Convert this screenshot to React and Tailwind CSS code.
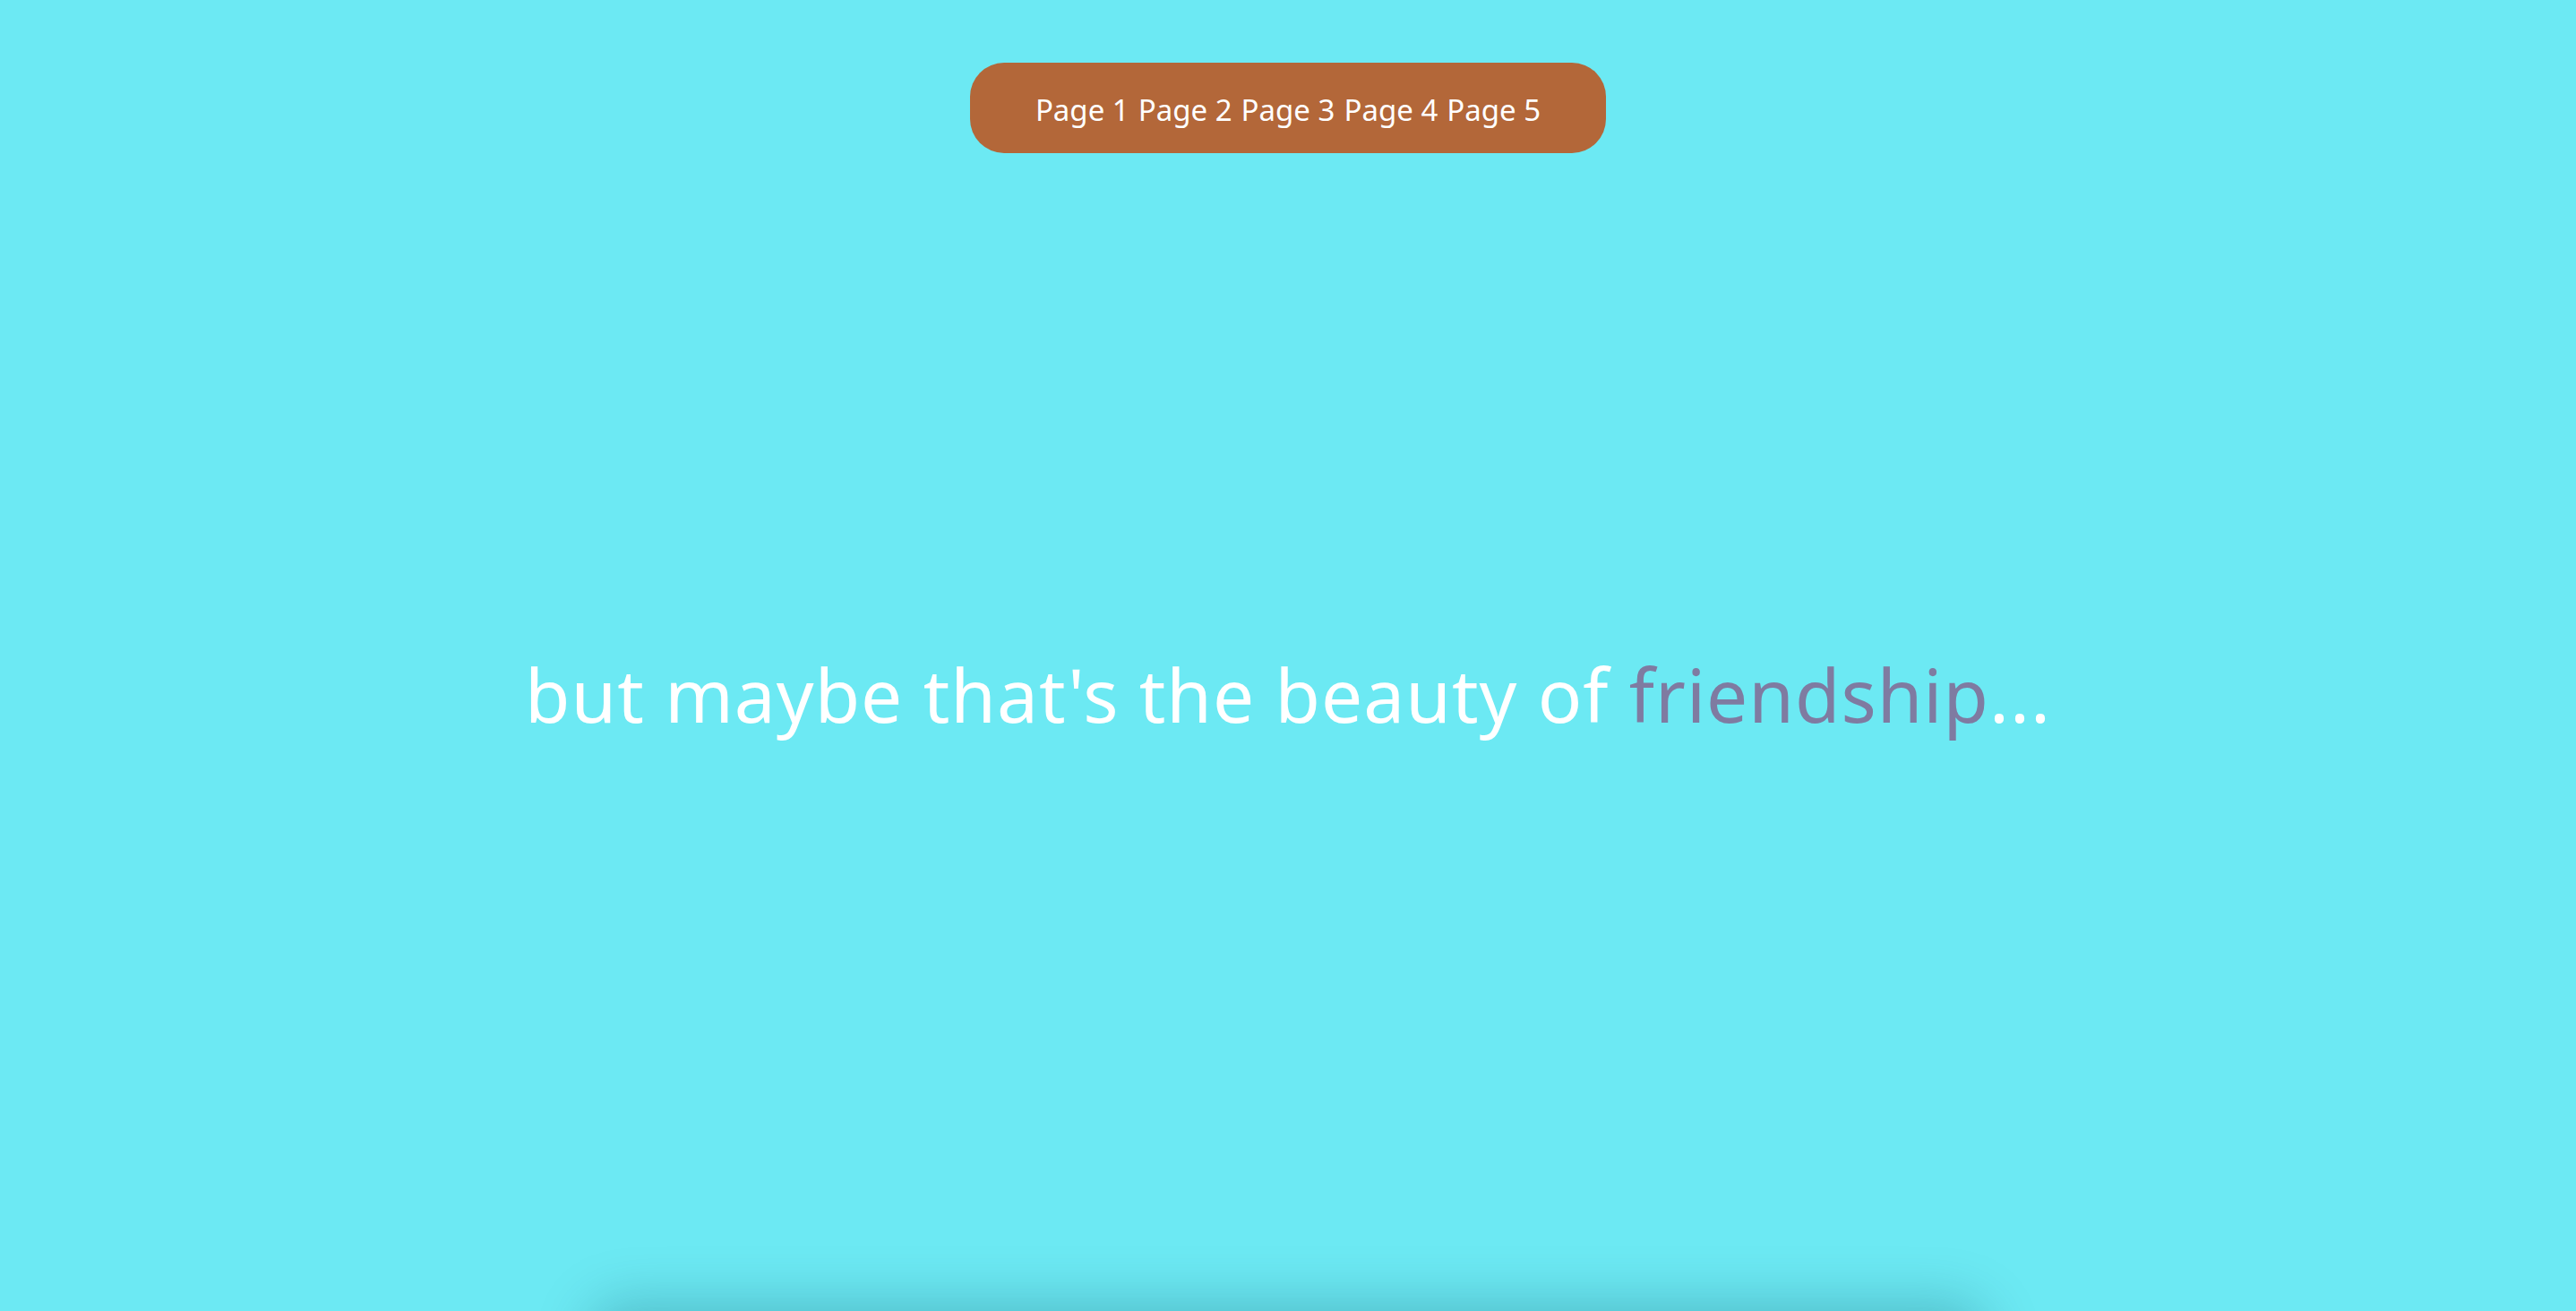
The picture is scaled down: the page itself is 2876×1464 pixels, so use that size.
import React from 'react';

const NAV_ITEMS = ['Page 1', 'Page 2', 'Page 3', 'Page 4', 'Page 5'];

const App = () => {
  return (
    <div className="relative w-full h-[1464px] overflow-hidden bg-[#6ce9f3] font-['Noto_Sans',sans-serif]">
      <nav className="absolute top-[70px] left-1/2 -translate-x-1/2 z-10">
        <div className="w-[710px] h-[101px] rounded-[38px] bg-[#b36739] flex items-center justify-center pt-[3px]">
          <ul className="flex items-center gap-[10px] text-white text-[33px] leading-none">
            {NAV_ITEMS.map((item) => (
              <li key={item}>
                <a href="#">{item}</a>
              </li>
            ))}
          </ul>
        </div>
      </nav>

      {/* hero */}
      <section className="h-[1464px] pt-[86px] flex items-center justify-center">
        <h1 className="text-white text-[82px] leading-none tracking-[1px] whitespace-nowrap">
          but maybe that's the beauty of <span className="text-[#7f7ba1]">friendship</span>...
        </h1>
      </section>

      {/* next card, mostly below the fold */}
      <section className="mx-auto w-[1560px] h-[600px] rounded-[40px] bg-[#6ce9f3] shadow-[0_-10px_60px_rgba(0,60,80,0.25)]" />
    </div>
  );
};

export default App;
